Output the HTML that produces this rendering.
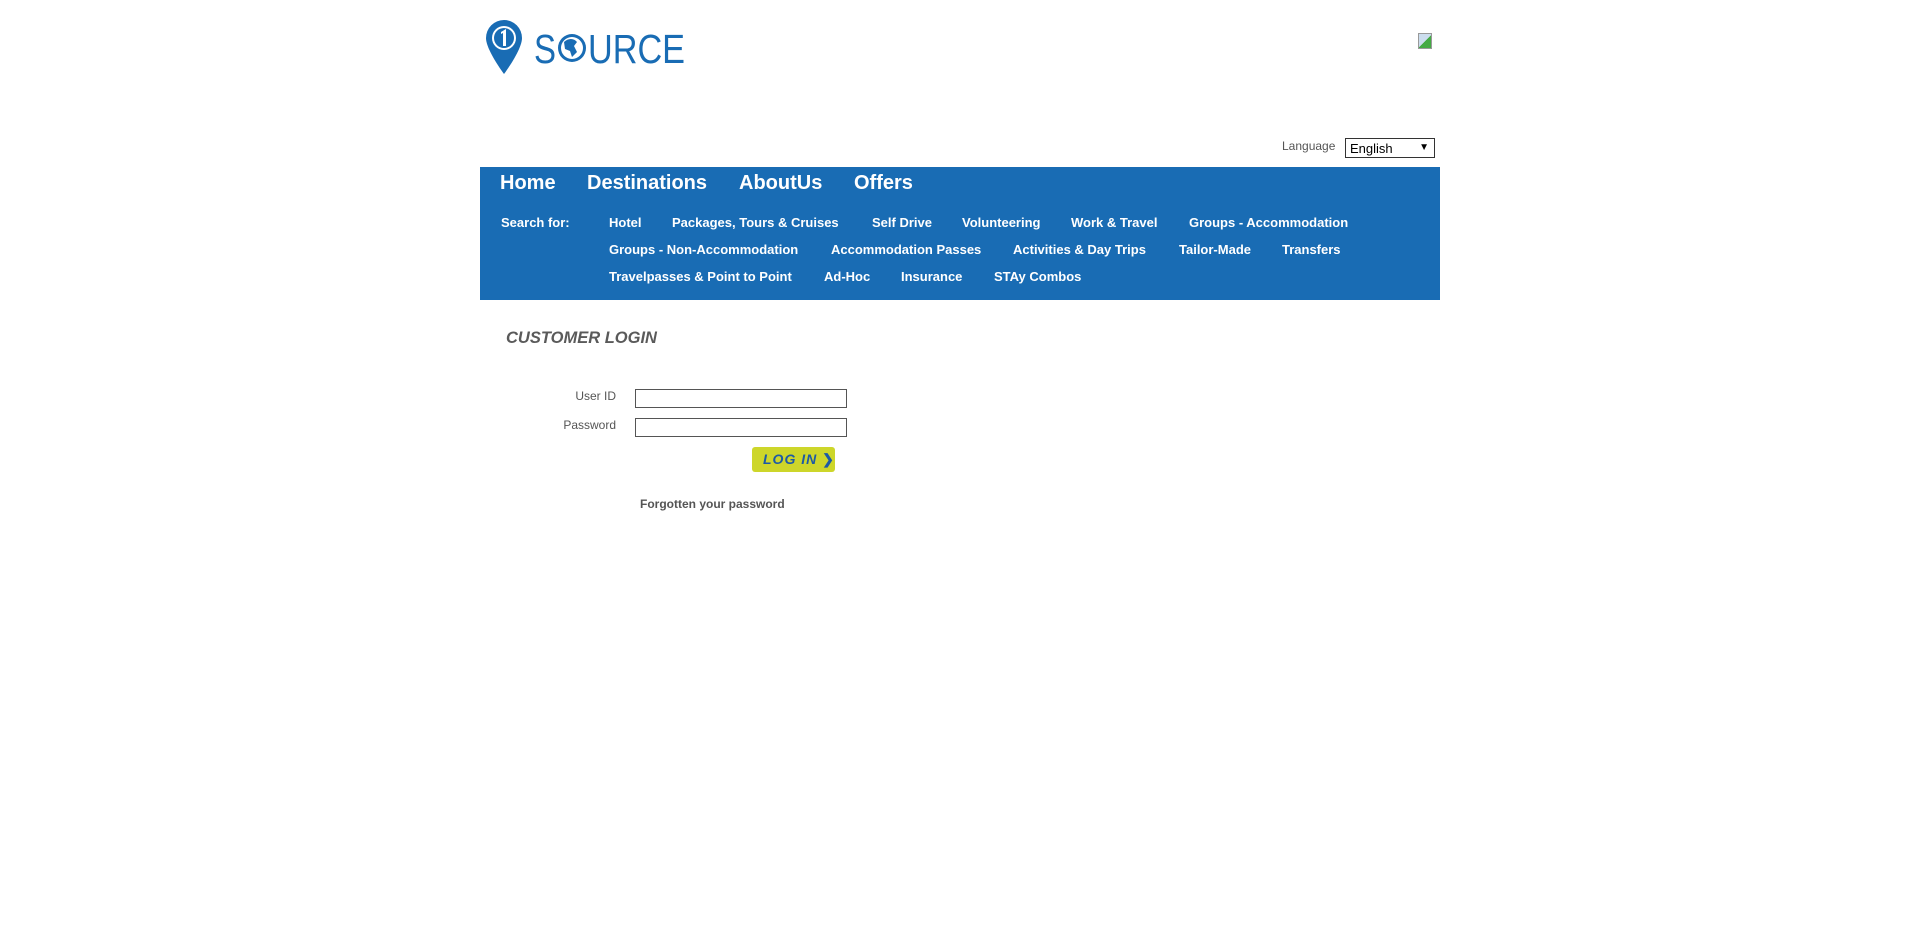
<!DOCTYPE html>
<html><head><meta charset="utf-8">
<style>
*{margin:0;padding:0;box-sizing:border-box}
body{width:1920px;height:935px;background:#fff;font-family:"Liberation Sans",Arial,sans-serif;position:relative;overflow:hidden}
.a{position:absolute;white-space:nowrap}
.bar{position:absolute;left:480px;top:167px;width:960px;height:133px;background:#196cb4}
.main{position:absolute;top:172px;font-size:20px;font-weight:bold;color:#fff}
.sub{position:absolute;font-size:13px;font-weight:bold;color:#fff}
.lbl{position:absolute;font-size:12px;color:#555;text-align:right;width:120px}
.inp{position:absolute;left:635px;width:212px;height:19px;border:1px solid #555;background:#fff}
</style></head><body>
<svg class="a" style="left:484px;top:18px" width="210" height="58" viewBox="0 0 210 58">
<path d="M20 2a18 18 0 0 0-18 18c0 12 18 36 18 36s18-24 18-36A18 18 0 0 0 20 2z" fill="#196cb4"/>
<circle cx="20" cy="20" r="12" fill="#fff"/><circle cx="20" cy="20" r="10" fill="#196cb4"/>
<path d="M17 14l5-3v17h-3V15l-2 1z" fill="#fff"/>
<text x="50" y="45" font-family="Liberation Sans, sans-serif" font-size="41" fill="#196cb4" textLength="22" lengthAdjust="spacingAndGlyphs">S</text>
<circle cx="88" cy="30" r="14" fill="#196cb4"/><circle cx="88" cy="30" r="11" fill="#fff"/><path d="M80 24c4-4 10-4 13 0l-3 4 3 6-5 5-2-6-5-2z" fill="#196cb4"/>
<text x="104" y="45" font-family="Liberation Sans, sans-serif" font-size="41" fill="#196cb4" textLength="97" lengthAdjust="spacingAndGlyphs">URCE</text>
</svg>
<div class="a" style="left:1418px;top:33px;width:14px;height:16px;border:1px solid #999;background:linear-gradient(135deg,#cde 50%,#4a4 50%)"></div>
<div class="a" style="left:1282px;top:139px;font-size:12px;color:#555">Language</div>
<div class="a" style="left:1345px;top:138px;width:90px;height:20px;border:1px solid #333;font-size:13px;padding:2px 4px;color:#000">English<span style="position:absolute;right:5px;top:3px;font-size:10px">▼</span></div>
<div class="bar"></div>
<div class="main" style="left:500px">Home</div>
<div class="main" style="left:587px">Destinations</div>
<div class="main" style="left:739px">AboutUs</div>
<div class="main" style="left:854px">Offers</div>
<div class="sub" style="left:501px;top:215px">Search for:</div>
<div class="sub" style="left:609px;top:215px">Hotel</div>
<div class="sub" style="left:672px;top:215px">Packages, Tours &amp; Cruises</div>
<div class="sub" style="left:872px;top:215px">Self Drive</div>
<div class="sub" style="left:962px;top:215px">Volunteering</div>
<div class="sub" style="left:1071px;top:215px">Work &amp; Travel</div>
<div class="sub" style="left:1189px;top:215px">Groups - Accommodation</div>
<div class="sub" style="left:609px;top:242px">Groups - Non-Accommodation</div>
<div class="sub" style="left:831px;top:242px">Accommodation Passes</div>
<div class="sub" style="left:1013px;top:242px">Activities &amp; Day Trips</div>
<div class="sub" style="left:1179px;top:242px">Tailor-Made</div>
<div class="sub" style="left:1282px;top:242px">Transfers</div>
<div class="sub" style="left:609px;top:269px">Travelpasses &amp; Point to Point</div>
<div class="sub" style="left:824px;top:269px">Ad-Hoc</div>
<div class="sub" style="left:901px;top:269px">Insurance</div>
<div class="sub" style="left:994px;top:269px">STAy Combos</div>
<div class="a" style="left:506px;top:329px;font-size:16.5px;font-weight:bold;font-style:italic;color:#5a5a5a">CUSTOMER LOGIN</div>
<div class="lbl" style="left:496px;top:389px">User ID</div>
<div class="lbl" style="left:496px;top:418px">Password</div>
<div class="inp" style="top:389px"></div>
<div class="inp" style="top:418px"></div>
<div class="a" style="left:752px;top:447px;width:83px;height:25px;background:#cdd62a;border-radius:3px;color:#1c5aa6;font-size:14px;font-weight:bold;font-style:italic;padding:4px 0 0 11px;letter-spacing:1px">LOG IN <span style="font-style:normal">❯</span></div>
<div class="a" style="left:640px;top:497px;font-size:12px;font-weight:bold;color:#555">Forgotten your password</div>
</body></html>
